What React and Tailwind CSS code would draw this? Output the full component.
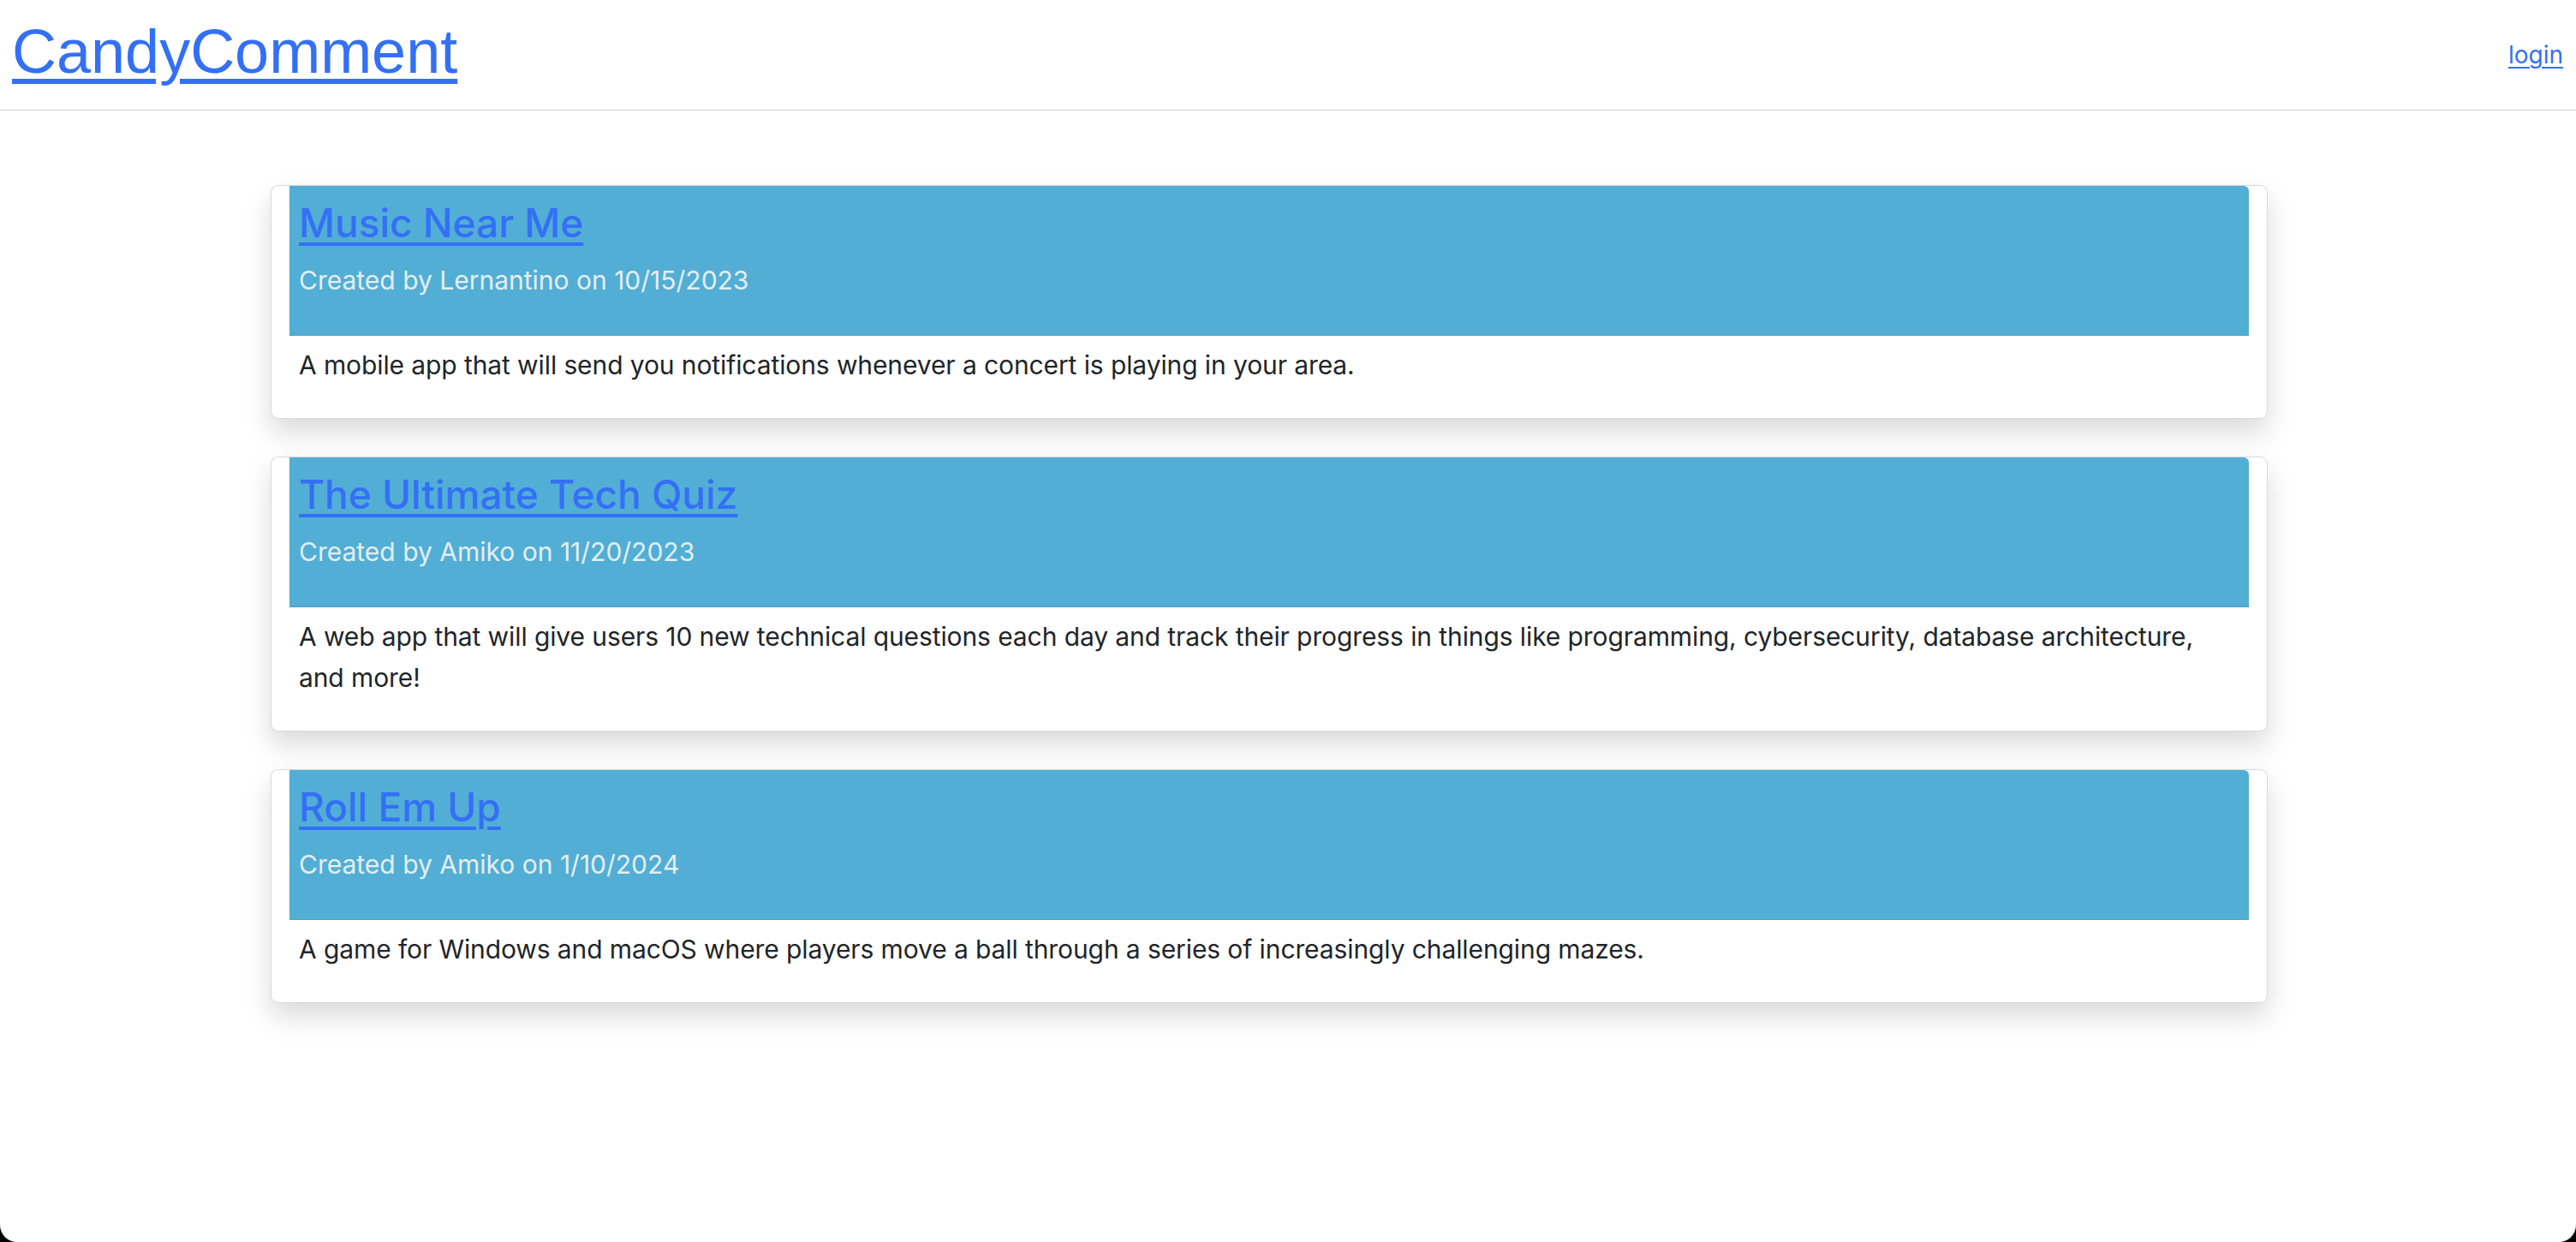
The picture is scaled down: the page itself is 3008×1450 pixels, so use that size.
import React from 'react';

const projects = [
  {
    title: 'Music Near Me',
    author: 'Lernantino',
    date: '10/15/2023',
    description: 'A mobile app that will send you notifications whenever a concert is playing in your area.',
  },
  {
    title: 'The Ultimate Tech Quiz',
    author: 'Amiko',
    date: '11/20/2023',
    description:
      'A web app that will give users 10 new technical questions each day and track their progress in things like programming, cybersecurity, database architecture, and more!',
  },
  {
    title: 'Roll Em Up',
    author: 'Amiko',
    date: '1/10/2024',
    description: 'A game for Windows and macOS where players move a ball through a series of increasingly challenging mazes.',
  },
];

const ProjectCard = ({ project }) => {
  return (
    <div className="bg-white border border-[rgba(0,0,0,0.15)] rounded-[9px] px-[21px] shadow-[0_16px_32px_rgba(0,0,0,0.15)]">
      <div className="bg-[#52aed5] rounded-tr-[6px] border-b border-[#4a9cc0] px-[11px] pt-[14px] pb-[40px]">
        <h2 className="text-[46px] leading-[58px] font-medium">
          <a href="#" className="text-[#3370f6] underline decoration-[4px] underline-offset-[6px]">
            {project.title}
          </a>
        </h2>
        <p className="mt-[14px] text-[30px] leading-[48px] text-[#e4eef2]">
          Created by {project.author} on {project.date}
        </p>
      </div>
      <div className="px-[11px] pt-[10px] pb-[38px]">
        <p className="text-[30px] leading-[48px] tracking-[-0.1px] text-[#212529]">{project.description}</p>
      </div>
    </div>
  );
};

const App = () => {
  return (
    <div className="bg-black h-[1450px] font-['Inter',sans-serif]">
      <div className="bg-white h-full rounded-b-[20px] overflow-hidden">
        <header className="h-[129px] border-b border-[#d0d0d0] flex items-start justify-between pl-[14px] pr-[15px]">
          <h1 className="mt-[19px] text-[72px] leading-[82px] font-['Liberation_Sans',Arial,sans-serif]">
            <a href="#" className="text-[#3370f6] underline decoration-[6px] underline-offset-[7px]">
              CandyComment
            </a>
          </h1>
          <a href="#" className="mt-[46px] text-[28px] leading-[36px] text-[#3370f6] underline decoration-[2px] underline-offset-[4px]">
            login
          </a>
        </header>

        <main className="pt-[87px] pl-[316px] w-[2648px] flex flex-col gap-[44px]">
          {projects.map((project) => (
            <ProjectCard key={project.title} project={project} />
          ))}
        </main>
      </div>
    </div>
  );
};

export default App;
